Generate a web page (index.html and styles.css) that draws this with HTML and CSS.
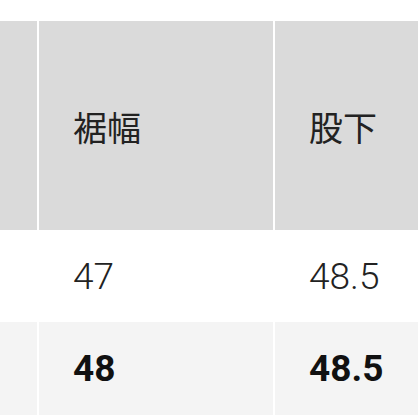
FILE: index.html
```html
<!DOCTYPE html>
<html lang="ja">
<head>
<meta charset="utf-8">
<link rel="stylesheet" href="styles.css">
</head>
<body>
<div class="table">
  <div class="cell head first"></div>
  <div class="cell head"><span class="jp">裾幅</span></div>
  <div class="cell head"><span class="jp">股下</span></div>

  <div class="cell row first"></div>
  <div class="cell row"><span class="num">47</span></div>
  <div class="cell row"><span class="num">48.5</span></div>

  <div class="cell alt first"></div>
  <div class="cell alt"><span class="num bold">48</span></div>
  <div class="cell alt"><span class="num bold">48.5</span></div>
</div>
</body>
</html>
```

FILE: styles.css
```css
html, body {
  margin: 0;
  padding: 0;
  background: #ffffff;
  overflow: hidden;
  width: 418px;
  height: 418px;
}
body {
  padding-top: 21px;
  box-sizing: border-box;
}
.table {
  display: grid;
  grid-template-columns: 37px 234px 143px;
  grid-template-rows: 209px 92px 93px;
  column-gap: 2px;
  width: 418px;
}
.cell {
  display: flex;
  align-items: center;
  padding-left: 34px;
  box-sizing: border-box;
  overflow: hidden;
}
.cell.first {
  padding-left: 0;
}
.head {
  background: #dadada;
}
.row {
  background: #ffffff;
}
.alt {
  background: #f4f4f4;
}
.jp {
  font-family: "Noto Sans CJK JP", "Noto Sans", sans-serif;
  font-size: 34px;
  font-weight: 400;
  color: #222222;
  line-height: 1;
  position: relative;
  top: 1px;
  white-space: nowrap;
}
.num {
  font-family: Roboto, "Liberation Sans", sans-serif;
  font-weight: 300;
  font-size: 37px;
  color: #222222;
  line-height: 1;
  white-space: nowrap;
}
.num.bold {
  font-weight: 700;
  color: #111111;
}
```
